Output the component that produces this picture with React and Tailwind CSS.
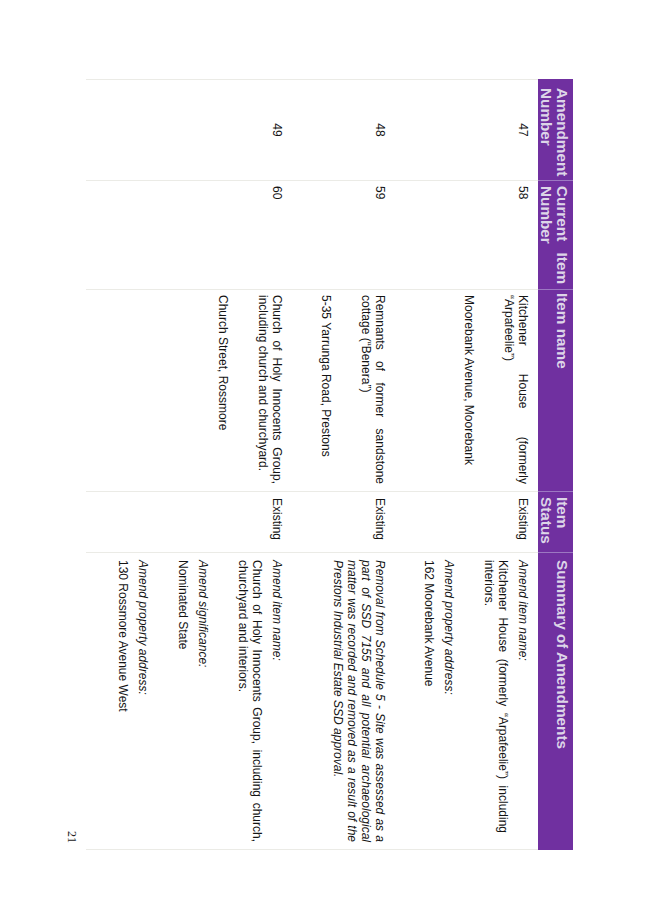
import React from "react";

function J({ lines }) {
  return lines.map((l, i) => (
    <div
      key={i}
      className={i < lines.length - 1 ? "text-justify [text-align-last:justify] whitespace-nowrap" : "whitespace-nowrap"}
    >
      {l}
    </div>
  ));
}

function P({ children, italic, className }) {
  return <div className={"mb-[6px] last:mb-0" + (italic ? " italic" : "") + (className ? " " + className : "")}>{children}</div>;
}

function Blank() {
  return <div className="h-[14px] mb-[6px]" />;
}

function Row({ a, b, name, status, summary, last }) {
  const base = "border-l border-[#ebebe6] pt-[8px] " + (last ? "pb-[30px]" : "pb-[27px]");
  return (
    <div className="grid grid-cols-[101px_109px_202px_61px_298px]">
      <div className={base + " text-center"}>{a}</div>
      <div className={base + " pl-[5px]"}>{b}</div>
      <div className={base + " pl-[5px] pr-[7px]"}>{name}</div>
      <div className={base + " pl-[6px]"}>{status}</div>
      <div className={base + " pl-[7px] pr-[7px] border-r"}>{summary}</div>
    </div>
  );
}

export default function App() {
  return (
    <div className="w-[653px] h-[924px] overflow-hidden bg-white">
      <div className="w-[924px] h-[653px] origin-top-left rotate-90 translate-x-[653px] bg-white pt-[80px] pl-[79px] font-['Liberation_Sans',Arial,sans-serif] text-[12px] leading-[14px] text-[#141414]">
        <div className="w-[771px]">
          {/* header */}
          <div className="grid grid-cols-[101px_109px_202px_61px_298px] h-[35px] bg-[#7030a0] text-[#ddd5e8] font-bold text-[15.3px] leading-[16px]">
            <div className="pt-[3px] pl-[9px]">
              <div>Amendment</div>
              <div>Number</div>
            </div>
            <div className="pt-[3px] pl-[5px] pr-[5px] border-l border-[#9c78c2]">
              <J lines={["Current Item", "Number"]} />
            </div>
            <div className="pt-[3px] pl-[3px] border-l border-[#9c78c2]">Item name</div>
            <div className="pt-[3px] pl-[5px] border-l border-[#9c78c2]">
              <div>Item</div>
              <div>Status</div>
            </div>
            <div className="pt-[3px] pl-[7px] border-l border-[#9c78c2]">Summary of Amendments</div>
          </div>

          <Row
            a="47"
            b="58"
            name={
              <>
                <P>
                  <J lines={["Kitchener House (formerly", "\u201CArpafeelie\u201D)"]} />
                </P>
                <Blank />
                <P>Moorebank Avenue, Moorebank</P>
              </>
            }
            status="Existing"
            summary={
              <>
                <P italic>Amend item name:</P>
                <P className="pr-[9px]">
                  <J lines={["Kitchener House (formerly \u201CArpafeelie\u201D) including", "interiors."]} />
                </P>
                <Blank />
                <P italic>Amend property address:</P>
                <P>162 Moorebank Avenue</P>
              </>
            }
          />

          <Row
            a="48"
            b="59"
            name={
              <>
                <P>
                  <J lines={["Remnants of former sandstone", "cottage (\u201CBenera\u201D)"]} />
                </P>
                <Blank />
                <P>5-35 Yarrunga Road, Prestons</P>
              </>
            }
            status="Existing"
            summary={
              <P italic>
                <J
                  lines={[
                    "Removal from Schedule 5 - Site was assessed as a",
                    "part of SSD 7155 and all potential archaeological",
                    "matter was recorded and removed as a result of the",
                    "Prestons Industrial Estate SSD approval.",
                  ]}
                />
              </P>
            }
          />

          <Row
            last
            a="49"
            b="60"
            name={
              <>
                <P>
                  <J lines={["Church of Holy Innocents Group,", "including church and churchyard."]} />
                </P>
                <Blank />
                <P>Church Street, Rossmore</P>
              </>
            }
            status="Existing"
            summary={
              <>
                <P italic>Amend item name:</P>
                <P>
                  <J lines={["Church of Holy Innocents Group, including church,", "churchyard and interiors."]} />
                </P>
                <Blank />
                <P italic>Amend significance:</P>
                <P>Nominated State</P>
                <Blank />
                <P italic>Amend property address:</P>
                <P>130 Rossmore Avenue West</P>
              </>
            }
          />

          <div className="mt-[7px] pr-[7px] text-right font-['Liberation_Serif','Times_New_Roman',serif] text-[12px] leading-[14px] text-[#222]">
            21
          </div>
        </div>
      </div>
    </div>
  );
}
